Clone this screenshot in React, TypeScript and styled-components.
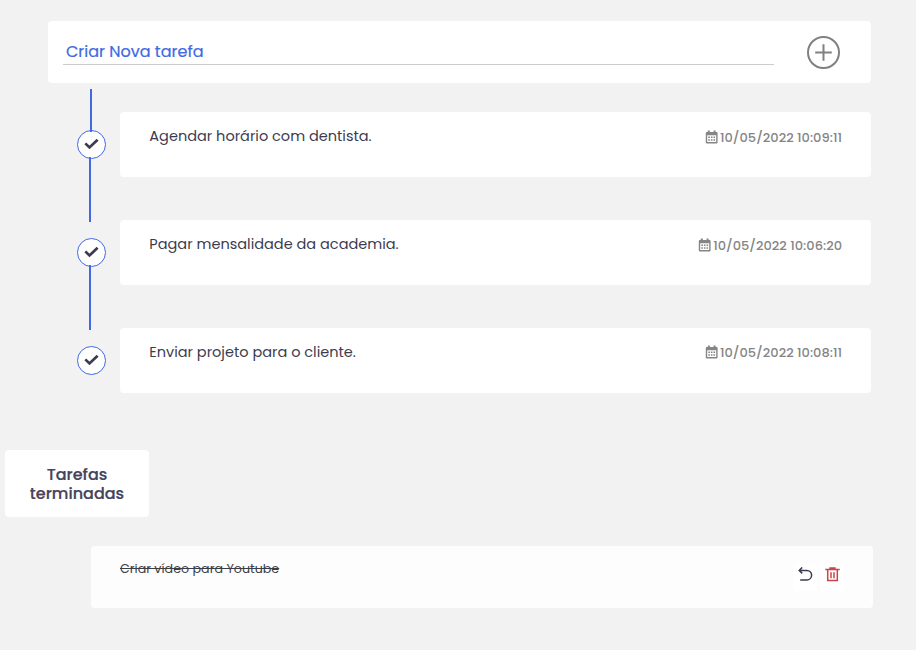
import React from "react";
import styled, { createGlobalStyle } from "styled-components";

const GlobalStyle = createGlobalStyle`
  * { box-sizing: border-box; }
  body {
    margin: 0;
    background: #f2f2f2;
    color: #3d3b4f;
    font-family: Poppins, Inter, "Open Sans", sans-serif;
  }
  button { font: inherit; color: inherit; border: 0; padding: 0; background: none; }
`;

const Page = styled.main`
  height: 650px;
  padding: 21px 45px 0 48px;
  overflow: hidden;
`;

const Card = styled.div`
  background: #fff;
  border-radius: 4px;
`;

const NewTask = styled(Card)`
  display: flex;
  justify-content: space-between;
  height: 62px;
  padding: 15px 31px 0 15px;
`;

const TaskField = styled.div`
  width: 711px;
  height: 29px;
  padding-left: 3px;
  border-bottom: 1px solid #ccc;
  color: #4169e1;
  font-size: 16px;
  line-height: 32px;
  white-space: nowrap;
  -webkit-text-stroke: 0.2px #4169e1;
`;

const AddButton = styled.button`
  width: 33px;
  height: 33px;
  svg { display: block; }
`;

const TaskList = styled.section`
  display: grid;
  row-gap: 43px;
  margin-top: 29px;
`;

const TaskRow = styled.article`
  display: grid;
  grid-template-columns: 72px 751px;
  height: 65px;
`;

const Marker = styled.div`
  position: relative;
  padding: 18px 0 0 29px;
`;

const Connector = styled.span<{ $first?: boolean }>`
  position: absolute;
  left: ${(p) => (p.$first ? 42 : 41)}px;
  top: ${(p) => (p.$first ? -23 : 45)}px;
  width: 2px;
  height: ${(p) => (p.$first ? 43 : 65)}px;
  background: #4169e1;
`;

const CheckButton = styled.button`
  display: grid;
  place-items: center;
  width: 29px;
  height: 29px;
  border: 1px solid #4169e1;
  border-radius: 50%;
  background: #fff;
`;

const TaskCard = styled(Card)`
  display: flex;
  justify-content: space-between;
  padding: 12px 29px 0 29.3px;
`;

const TaskTitle = styled.span`
  font-size: 14.53px;
  line-height: 24px;
  white-space: nowrap;
`;

const TaskDate = styled.time<{ $lift?: boolean }>`
  display: flex;
  gap: 2px;
  height: 24px;
  align-items: center;
  margin-top: ${(p) => (p.$lift ? 0 : 1)}px;
  color: #858585;
  font-size: 13px;
  line-height: 20px;
  font-weight: 500;
  white-space: nowrap;

  span { padding-top: 2px; }
`;

const DoneHeading = styled.h2`
  width: 144px;
  height: 67px;
  margin: 57px 0 0 -43px;
  padding: 15px 20px 0;
  border-radius: 4px;
  background: #fff;
  color: #46435a;
  font-size: 16px;
  line-height: 19px;
  font-weight: 500;
  text-align: center;
  -webkit-text-stroke: 0.2px #46435a;
`;

const DoneCard = styled(Card)`
  display: flex;
  justify-content: space-between;
  width: 782px;
  height: 62px;
  margin: 29px 0 0 43px;
  padding: 13px 29px 0 29px;
  background: #fdfdfd;
`;

const DoneTitle = styled.span`
  height: 20px;
  color: #3d3d45;
  font-size: 12.7px;
  line-height: 20px;
  text-decoration: line-through;
  white-space: nowrap;
`;

const Actions = styled.div`
  display: flex;
  gap: 3px;
  margin-top: 4px;
`;

const ActionButton = styled.button`
  display: grid;
  place-items: center;
  width: 24px;
  height: 28px;
  padding-bottom: 4px;
  border-radius: 4px;
  background: #fff;
`;

const PlusIcon = () => (
  <svg width="33" height="33" viewBox="0 0 33 33" fill="none" stroke="#808080" strokeWidth="2">
    <circle cx="16.5" cy="16.5" r="15.5" />
    <path d="M16.5 8.2v16.6M8.2 16.5h16.6" />
  </svg>
);

const CheckIcon = () => (
  <svg width="15" height="15" viewBox="0 0 15 15" fill="none" stroke="#3d3b4f" strokeWidth="2.7">
    <path d="M1.3 6.4l4.2 4.1 8.1-7.7" />
  </svg>
);

const CalendarIcon = () => (
  <svg width="13" height="14" viewBox="0 0 13 14" fill="#858585">
    <path d="M2.8.5h2v1.4h3.8V.5h2v1.4h1.2l.8.8v10l-.8.8H1.6l-.8-.8v-10l.8-.8h1.2zM2.2 5.2v6.9h9V5.2z" fillRule="evenodd" />
    <path d="M3.3 6.5h1.6V8H3.3zm2.6 0h1.6V8H5.9zm2.6 0h1.6V8H8.5zM3.3 9.2h1.6v1.5H3.3zm2.6 0h1.6v1.5H5.9zm2.6 0h1.6v1.5H8.5z" />
  </svg>
);

const UndoIcon = () => (
  <svg width="16" height="16" viewBox="0 0 16 16" fill="none" stroke="#3d3b4f" strokeWidth="1.5">
    <path d="M5.2.4L2.2 3.4l3 3M2.2 3.4h7.6a4.7 4.7 0 0 1 0 9.6H3.2" />
  </svg>
);

const TrashIcon = () => (
  <svg width="15" height="16" viewBox="0 0 15 16" fill="none" stroke="#cc444b" strokeWidth="1.5">
    <path d="M.3 2.4h14.4M4.3 1h6.4M2.7 2.4v11.2h9.6V2.4" />
    <path d="M6 5.2v6M9 5.2v6" />
  </svg>
);

const tasks = [
  { title: "Agendar horário com dentista.", date: "10/05/2022 10:09:11" },
  { title: "Pagar mensalidade da academia.", date: "10/05/2022 10:06:20" },
  { title: "Enviar projeto para o cliente.", date: "10/05/2022 10:08:11" },
];

export default function App() {
  return (
    <Page>
      <GlobalStyle />
      <NewTask>
        <TaskField>Criar Nova tarefa</TaskField>
        <AddButton aria-label="Adicionar"><PlusIcon /></AddButton>
      </NewTask>
      <TaskList>
        {tasks.map((task, index) => (
          <TaskRow key={task.title}>
            <Marker>
              <CheckButton aria-label="Concluir"><CheckIcon /></CheckButton>
              {index === 0 && <Connector $first />}
              {index < tasks.length - 1 && <Connector />}
            </Marker>
            <TaskCard>
              <TaskTitle>{task.title}</TaskTitle>
              <TaskDate $lift={index === 2}>
                <CalendarIcon />
                <span>{task.date}</span>
              </TaskDate>
            </TaskCard>
          </TaskRow>
        ))}
      </TaskList>
      <DoneHeading>Tarefas terminadas</DoneHeading>
      <DoneCard>
        <DoneTitle>Criar vídeo para Youtube</DoneTitle>
        <Actions>
          <ActionButton aria-label="Desfazer"><UndoIcon /></ActionButton>
          <ActionButton aria-label="Excluir"><TrashIcon /></ActionButton>
        </Actions>
      </DoneCard>
    </Page>
  );
}
